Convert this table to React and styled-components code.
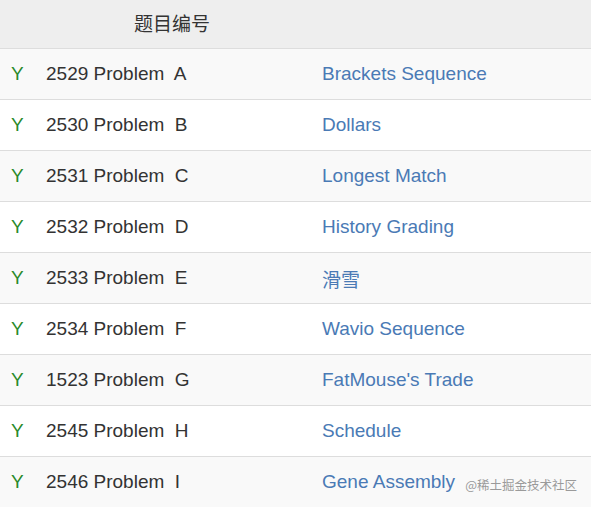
import React from "react";
import styled, { createGlobalStyle } from "styled-components";

const Global = createGlobalStyle`
  body {
    margin: 0;
    background: #ffffff;
    font-family: "Liberation Sans", Arial, "Noto Sans CJK SC", sans-serif;
  }
`;

const Table = styled.div`
  position: relative;
  width: 591px;
  font-size: 19px;
  color: #333333;
`;

const Row = styled.div`
  display: grid;
  grid-template-columns: 46px 276px 1fr;
  align-items: center;
  height: ${(p) => (p.head ? "48px" : "50px")};
  background: ${(p) => (p.head ? "#eeeeee" : p.odd ? "#f9f9f9" : "#ffffff")};
  border-bottom: 1px solid #dddddd;
`;

const Status = styled.span`
  padding-left: 11px;
  color: #2a8a2a;
`;

const Problem = styled.span`
  white-space: pre;
`;

const HeadTitle = styled.span`
  grid-column: 2;
  padding-left: 88px;
  padding-bottom: 4px;
  font-family: "Noto Sans CJK SC", sans-serif;
  font-size: 19px;
  color: #333333;
`;

const Title = styled.a`
  color: #4a7ab5;
  text-decoration: none;
  font-family: "Liberation Sans", "Noto Sans CJK SC", sans-serif;
`;

const Watermark = styled.span`
  position: absolute;
  right: 14px;
  bottom: 14px;
  font-size: 12.5px;
  color: #9a9a9a;
  font-family: "Noto Sans CJK SC", sans-serif;
`;

const problems = [
  ["2529", "A", "Brackets Sequence"],
  ["2530", "B", "Dollars"],
  ["2531", "C", "Longest Match"],
  ["2532", "D", "History Grading"],
  ["2533", "E", "滑雪"],
  ["2534", "F", "Wavio Sequence"],
  ["1523", "G", "FatMouse's Trade"],
  ["2545", "H", "Schedule"],
  ["2546", "I", "Gene Assembly"],
];

export default function App() {
  return (
    <>
      <Global />
      <Table>
        <Row head>
          <HeadTitle>题目编号</HeadTitle>
        </Row>
        {problems.map(([id, letter, title], i) => (
          <Row key={id} odd={i % 2 === 0}>
            <Status>Y</Status>
            <Problem>{`${id} Problem  ${letter}`}</Problem>
            <Title href="#">{title}</Title>
          </Row>
        ))}
        <Watermark>@稀土掘金技术社区</Watermark>
      </Table>
    </>
  );
}
